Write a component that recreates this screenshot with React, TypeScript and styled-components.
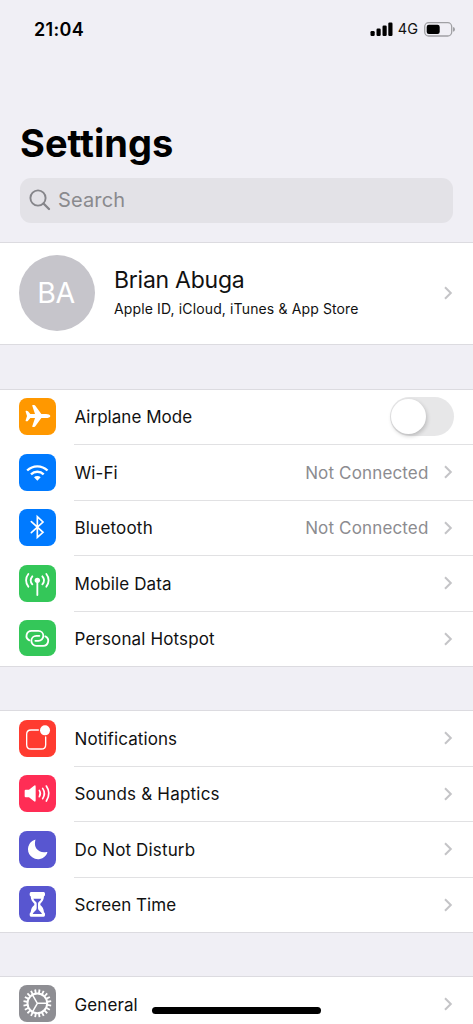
import React from "react";
import styled, { createGlobalStyle } from "styled-components";

const GlobalStyle = createGlobalStyle`
  * { box-sizing: border-box; }
  html, body { margin: 0; height: 100%; overflow: hidden; background: #f0eff5; }
  body { font-family: Inter, "Liberation Sans", sans-serif; color: #111; }
`;

const Screen = styled.main`
  width: 473px;
  height: 1024px;
  overflow: hidden;
  position: relative;
  background: #f0eff5;
`;

const Header = styled.header`
  height: 242px;
  display: flex;
  flex-direction: column;
  padding: 0 20px;
`;

const StatusBar = styled.div`
  display: flex;
  justify-content: space-between;
  align-items: center;
  height: 58px;
  flex: none;
  padding: 0 0 0 14px;
`;

const Clock = styled.span`
  font-size: 18px;
  font-weight: 600;
  letter-spacing: 0.3px;
  color: #000;
`;

const StatusIcons = styled.div`
  display: flex;
  align-items: center;
  margin-right: -2px;
  color: #111;
`;

const Network = styled.span`
  font-size: 14.5px;
  line-height: 18px;
  margin: 0 6px 0 5px;
`;

const Title = styled.h1`
  margin: 62px 0 0;
  font-size: 38px;
  line-height: 46px;
  font-weight: 700;
  letter-spacing: 0;
  color: #000;
`;

const SearchBar = styled.div`
  flex: none;
  display: flex;
  align-items: center;
  gap: 7px;
  height: 45px;
  margin-top: 12px;
  padding: 0 0 1px 9px;
  border-radius: 11px;
  background: #e3e2e7;
  color: #8a8a8e;
  font-size: 20px;
  letter-spacing: 0.15px;
`;

const Profile = styled.section`
  display: flex;
  align-items: center;
  height: 103px;
  padding: 0 19px 1px;
  background: #fff;
  border: solid #dcdbe0;
  border-width: 1px 0;
`;

const Avatar = styled.div`
  display: flex;
  align-items: center;
  justify-content: center;
  width: 76px;
  height: 76px;
  margin-right: 19px;
  padding: 0 2px 1px 0;
  border-radius: 50%;
  background: #c6c5cb;
  color: #fff;
  font-size: 28.5px;
  font-weight: 400;
  letter-spacing: -0.3px;
`;

const Person = styled.div`
  flex: 1;
  padding-bottom: 2px;
`;

const Name = styled.div`
  font-size: 23px;
  line-height: 30px;
  letter-spacing: -0.25px;
  color: #111;
`;

const Details = styled.div`
  margin-top: 4px;
  font-size: 14px;
  line-height: 20px;
  letter-spacing: 0.13px;
  white-space: nowrap;
`;

const Group = styled.section`
  margin-top: 43.5px;
  background: #fff;
  border: solid #dcdbe0;
  border-width: 1px 0;
`;

const RowBox = styled.div`
  display: flex;
  align-items: center;
  height: 55.5px;
  padding-left: 19px;

  &:last-child { height: 54px; }
`;

const Tile = styled.svg<{ $color: string }>`
  flex: none;
  width: 36.7px;
  height: 36.7px;
  margin: 0 18.8px 1px 0;
  border-radius: 8px;
  background: ${(p) => p.$color};
  fill: none;
  stroke: #fff;
  stroke-linecap: round;
  stroke-linejoin: round;
`;

const RowBody = styled.div`
  flex: 1;
  display: flex;
  align-items: center;
  align-self: stretch;
  padding-right: 19px;
  border-bottom: 1px solid #e1e1e3;

  ${RowBox}:last-child & { border-bottom: 0; }
`;

const Label = styled.span<{ $spacing?: number }>`
  flex: 1;
  padding-top: 1px;
  font-size: 17px;
  letter-spacing: ${(p) => p.$spacing ?? 0.1}px;
  white-space: nowrap;
`;

const Value = styled.span`
  margin-right: 13.5px;
  padding-top: 1px;
  font-size: 17px;
  letter-spacing: 0.15px;
  color: #8c8c90;
`;

const Switch = styled.span`
  width: 64px;
  height: 39px;
  margin-bottom: 0.5px;
  padding: 2px 1px;
  border-radius: 20px;
  background: #e7e7e8;
`;

const Knob = styled.span`
  display: block;
  width: 35px;
  height: 35px;
  border-radius: 50%;
  background: #fff;
  box-shadow: 1px 2px 4px rgba(0, 0, 0, 0.2);
`;

const HomeIndicator = styled.div`
  position: absolute;
  left: 152px;
  top: 1007px;
  width: 169px;
  height: 7px;
  border-radius: 4px;
  background: #000;
`;

const Chevron = () => (
  <svg width="12" height="16" viewBox="0 0 12 16" fill="none" stroke="#c4c4c7" strokeWidth="2">
    <path d="M3 2.200 8.800 8 3 13.800" />
  </svg>
);

const teeth = Array.from({ length: 20 }, (_, i) => i * 18);

const icons: Record<string, React.ReactNode> = {
  airplane: (
    <path
      fill="#fff"
      stroke="none"
      d="M94 54c0-4-7-6-13-6H67L49 23c-1-1.500-2-2-4-2h-3c-2 0-2.500 1-2 3l8 24H34l-7-8c-1-1-2-2-4-2h-1c-2 0-2.500 1-2 3l4 13-4 13c-.5 2 0 3 2 3h1c2 0 3-1 4-2l7-8h14l-8 24c-.5 2 0 3 2 3h3c2 0 3-.5 4-2l18-25h14c6 0 13-2 13-6Z"
    />
  ),
  wifi: (
    <>
      <g strokeWidth="7" strokeLinecap="butt">
        <path d="M24.500 49.500a43.500 43.500 0 0 1 61 0" />
        <path d="M36 61a27 27 0 0 1 38 0" />
      </g>
      <path fill="#fff" stroke="none" d="M45 70a14 14 0 0 1 20 0L55 80Z" />
    </>
  ),
  bluetooth: <path strokeWidth="5" strokeLinejoin="miter" d="M37 38 72 70 55 85V23l17 16-35 32" />,
  antenna: (
    <>
      <circle cx="55" cy="46" r="8" fill="#fff" stroke="none" />
      <g strokeWidth="5.500">
        <path d="M55 48v42" />
        <path d="M40 34c-6 7-6 17 0 24M70 34c6 7 6 17 0 24M28 27c-9 11-9 27 0 38M82 27c9 11 9 27 0 38" />
      </g>
    </>
  ),
  hotspot: (
    <g strokeWidth="5.500">
      <path d="M31 61A15 15 0 0 1 38 32.500H58A15 15 0 0 1 58 62.500H49" />
      <path d="M79 49A15 15 0 0 1 72 77.500H52A15 15 0 0 1 52 47.500H61" />
    </g>
  ),
  notifications: (
    <>
      <path strokeWidth="4" d="M58 30H36Q23 30 23 43V74Q23 87 36 87H67Q80 87 80 74V51" />
      <circle cx="78" cy="31" r="15" fill="#fff" stroke="none" />
    </>
  ),
  sounds: (
    <>
      <path fill="#fff" stroke="none" d="M20 44h10l15-12q5-3 5 3v41q0 6-5 3L30 67H20q-3 0-3-3V47q0-3 3-3Z" />
      <path strokeWidth="5" d="M61 46q6 9 0 19M71 40q10 15 0 31M82 33q15 22 0 45" />
    </>
  ),
  moon: <path fill="#fff" stroke="none" d="M48 26q2-1 1 2C43 50 58 67 82 63q4-1 3 2A30 30 0 1 1 48 26Z" />,
  hourglass: (
    <>
      <path
        fill="#fff"
        stroke="none"
        d="M36 18H74q4 0 4 5v3q0 3-3 5c-1 11-4 16-11 22v4c7 6 10 11 11 22q3 2 3 5v3q0 5-4 5H36q-4 0-4-5v-3q0-3 3-5c1-11 4-16 11-22v-4C39 47 36 42 35 31q-3-2-3-5v-3q0-5 4-5Z"
      />
      <path fill="#5856d0" stroke="none" d="M43 38H67q-2 6-8 10-2 2-2 5V67q0 5 5 8 5 4 7 9H41q2-5 7-9 5-3 5-8V53q0-3-2-5-6-4-8-10Z" />
    </>
  ),
  gear: (
    <>
      <circle cx="55" cy="55" r="29.500" strokeWidth="6" />
      <g strokeWidth="5.500" strokeLinecap="butt">
        {teeth.map((a) => (
          <path key={a} d="M55 24V13" transform={`rotate(${a + 9} 55 55)`} />
        ))}
      </g>
      <g strokeWidth="4.500">
        <path d="M55 55H85M55 55 40 29M55 55 40 81" />
      </g>
    </>
  ),
};

interface Item {
  icon: string;
  color: string;
  label: string;
  spacing?: number;
  value?: string;
  toggle?: boolean;
}

const groups: Item[][] = [
  [
    { icon: "airplane", color: "#ff9800", label: "Airplane Mode", spacing: 0.03, toggle: true },
    { icon: "wifi", color: "#007aff", label: "Wi-Fi", value: "Not Connected" },
    { icon: "bluetooth", color: "#007aff", label: "Bluetooth", spacing: 0.2, value: "Not Connected" },
    { icon: "antenna", color: "#34c759", label: "Mobile Data", spacing: 0.12 },
    { icon: "hotspot", color: "#34c759", label: "Personal Hotspot", spacing: 0.14 },
  ],
  [
    { icon: "notifications", color: "#ff3b30", label: "Notifications" },
    { icon: "sounds", color: "#ff2d55", label: "Sounds & Haptics", spacing: 0.2 },
    { icon: "moon", color: "#5856d0", label: "Do Not Disturb", spacing: 0.15 },
    { icon: "hourglass", color: "#5856d0", label: "Screen Time", spacing: 0.03 },
  ],
  [{ icon: "gear", color: "#8e8e93", label: "General" }],
];

const Row = ({ icon, color, label, spacing, value, toggle }: Item) => (
  <RowBox>
    <Tile $color={color} viewBox="0 0 110 110">
      {icons[icon]}
    </Tile>
    <RowBody>
      <Label $spacing={spacing}>{label}</Label>
      {value && <Value>{value}</Value>}
      {toggle ? (
        <Switch>
          <Knob />
        </Switch>
      ) : (
        <Chevron />
      )}
    </RowBody>
  </RowBox>
);

export default function App() {
  return (
    <Screen>
      <GlobalStyle />
      <Header>
        <StatusBar>
          <Clock>21:04</Clock>
          <StatusIcons>
            <svg width="23" height="14" viewBox="0 0 23 14" fill="#000">
              <rect x="0.500" y="9" width="4.200" height="5" rx="1.200" />
              <rect x="6.500" y="6.500" width="4.200" height="7.500" rx="1.200" />
              <rect x="12.500" y="3.500" width="4.200" height="10.500" rx="1.200" />
              <rect x="18.300" y="0.500" width="4.200" height="13.500" rx="1.200" />
            </svg>
            <Network>4G</Network>
            <svg width="31" height="15" viewBox="0 0 31 15">
              <rect x="0.700" y="0.700" width="27" height="13.300" rx="4" fill="none" stroke="#a0a0a4" strokeWidth="1.300" />
              <rect x="2.700" y="2.700" width="13" height="9.300" rx="2.200" />
              <path d="M29 5q2 .5 2 2.400T29 9.800Z" fill="#a0a0a4" />
            </svg>
          </StatusIcons>
        </StatusBar>
        <Title>Settings</Title>
        <SearchBar>
          <svg width="22" height="22" viewBox="0 0 22 22" fill="none" stroke="#85858a" strokeWidth="1.900" strokeLinecap="round">
            <circle cx="9" cy="9" r="7.600" />
            <path d="m14.500 14.500 5.500 5.500" strokeWidth="2.300" />
          </svg>
          Search
        </SearchBar>
      </Header>
      <Profile>
        <Avatar>BA</Avatar>
        <Person>
          <Name>Brian Abuga</Name>
          <Details>Apple ID, iCloud, iTunes &amp; App Store</Details>
        </Person>
        <Chevron />
      </Profile>
      {groups.map((items) => (
        <Group key={items[0].label}>
          {items.map((item) => (
            <Row key={item.label} {...item} />
          ))}
        </Group>
      ))}
      <HomeIndicator />
    </Screen>
  );
}
